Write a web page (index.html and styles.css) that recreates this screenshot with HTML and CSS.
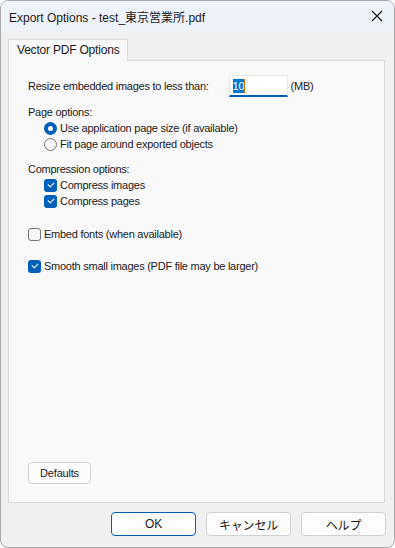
FILE: index.html
```html
<!DOCTYPE html>
<html lang="en">
<head>
    <meta charset="UTF-8">
    <title>Export Options</title>
    <link rel="stylesheet" href="styles.css">
</head>
<body>
    <div class="window">
        <div class="titlebar">
            <span class="title">Export Options - test_東京営業所.pdf</span>
            <span class="close">
                <svg width="12" height="12" viewBox="0 0 12 12"><path d="M1 1L11 11M11 1L1 11" stroke="#1a1a1a" stroke-width="1.2"/></svg>
            </span>
        </div>

        <div class="tabs">
            <div class="tab">Vector PDF Options</div>
        </div>

        <div class="panel">
            <div class="row resize-row">
                <span>Resize embedded images to less than:</span>
                <span class="field"><span class="sel">10</span><span class="caret"></span></span>
                <span>(MB)</span>
            </div>

            <!-- Page options -->
            <div class="group-label">Page options:</div>
            <div class="indent">
                <div class="opt"><span class="radio on"></span>Use application page size (if available)</div>
                <div class="opt"><span class="radio"></span>Fit page around exported objects</div>
            </div>

            <!-- Compression -->
            <div class="group-label compress">Compression options:</div>
            <div class="indent">
                <div class="opt"><span class="check on"></span>Compress images</div>
                <div class="opt"><span class="check on"></span>Compress pages</div>
            </div>

            <div class="opt single embed"><span class="check"></span>Embed fonts (when available)</div>
            <div class="opt single smooth"><span class="check on"></span>Smooth small images (PDF file may be larger)</div>

            <div class="spacer"></div>
            <button class="btn defaults">Defaults</button>
        </div>

        <div class="footer">
            <button class="btn main default">OK</button>
            <button class="btn main">キャンセル</button>
            <button class="btn main">ヘルプ</button>
        </div>
    </div>
</body>
</html>
```

FILE: styles.css
```css
* {
    margin: 0;
    padding: 0;
    box-sizing: border-box;
}

body {
    font-family: "Liberation Sans", "Noto Sans CJK JP", sans-serif;
    font-size: 11px;
    letter-spacing: -0.25px;
    color: #1a1a1a;
    background: #ffffff;
}

.window {
    width: 395px;
    height: 548px;
    background: #f0f0f0;
    border: 1px solid #a9a9a9;
    border-radius: 8px;
    overflow: hidden;
    display: flex;
    flex-direction: column;
}

.titlebar {
    height: 30px;
    background: #eef3f9;
    display: flex;
    align-items: center;
    justify-content: space-between;
    padding: 0 10px 0 8px;
}

.title {
    font-size: 12px;
    letter-spacing: 0;
    color: #1a1a1a;
}

.close {
    display: flex;
    width: 14px;
    height: 14px;
    align-items: center;
    justify-content: center;
}

.tabs {
    display: flex;
    padding: 8px 0 0 7px;
}

.tab {
    background: #f9f9f9;
    border: 1px solid #dadada;
    border-bottom: none;
    height: 22px;
    padding: 0 8px;
    line-height: 21px;
    font-size: 12px;
    letter-spacing: -0.2px;
    position: relative;
    z-index: 1;
    margin-bottom: -1px;
}

.panel {
    margin: 0 9px 0 7px;
    height: 443px;
    background: #f9f9f9;
    border: 1px solid #dadada;
    padding: 14px 19px 18px 19px;
    display: flex;
    flex-direction: column;
}

.row {
    display: flex;
    align-items: center;
}

.resize-row {
    height: 22px;
}

.field {
    margin-left: 20px;
    margin-right: 3px;
    width: 59px;
    height: 22px;
    background: #ffffff;
    border: 1px solid #e6e6e6;
    border-bottom: 2px solid #005fb8;
    display: flex;
    align-items: center;
    padding-left: 3px;
}

.sel {
    background: #0078d7;
    color: #ffffff;
    line-height: 14px;
}

.caret {
    width: 1px;
    height: 14px;
    background: #e06c00;
}

.group-label {
    margin-top: 7px;
    line-height: 16px;
}

.group-label.compress {
    margin-top: 9px;
}

.indent {
    padding-left: 16px;
}

.opt {
    display: flex;
    align-items: center;
    height: 16px;
    gap: 3px;
}

.single.embed {
    margin-top: 17px;
}

.single.smooth {
    margin-top: 16px;
}

.radio {
    width: 13px;
    height: 13px;
    border-radius: 50%;
    border: 1px solid #767676;
    background: #f6f6f6;
}

.radio.on {
    border: none;
    background: #005fb8;
    display: flex;
    align-items: center;
    justify-content: center;
}

.radio.on::after {
    content: "";
    width: 5px;
    height: 5px;
    border-radius: 50%;
    background: #ffffff;
}

.check {
    width: 13px;
    height: 13px;
    border-radius: 3px;
    border: 1px solid #767676;
    background: #f6f6f6;
}

.check.on {
    border: none;
    background: #005fb8;
    position: relative;
}

.check.on::after {
    content: "";
    position: absolute;
    left: 4px;
    top: 3px;
    width: 5px;
    height: 3px;
    border-left: 1px solid #ffffff;
    border-bottom: 1px solid #ffffff;
    transform: rotate(-45deg);
}

.spacer {
    flex: 1;
}

.btn {
    font-family: "Liberation Sans", "Noto Sans CJK JP", sans-serif;
    font-size: 11px;
    letter-spacing: -0.2px;
    color: #1a1a1a;
    background: #fdfdfd;
    border: 1px solid #d0d0d0;
    border-radius: 4px;
    height: 22px;
}

.defaults {
    width: 63px;
    align-self: flex-start;
}

.footer {
    display: flex;
    justify-content: flex-end;
    gap: 10px;
    padding: 9px 8px 0 0;
}

.btn.main {
    width: 85px;
    height: 24px;
    font-size: 12px;
}

.btn.default {
    border: 1px solid #005fb8;
}
```
